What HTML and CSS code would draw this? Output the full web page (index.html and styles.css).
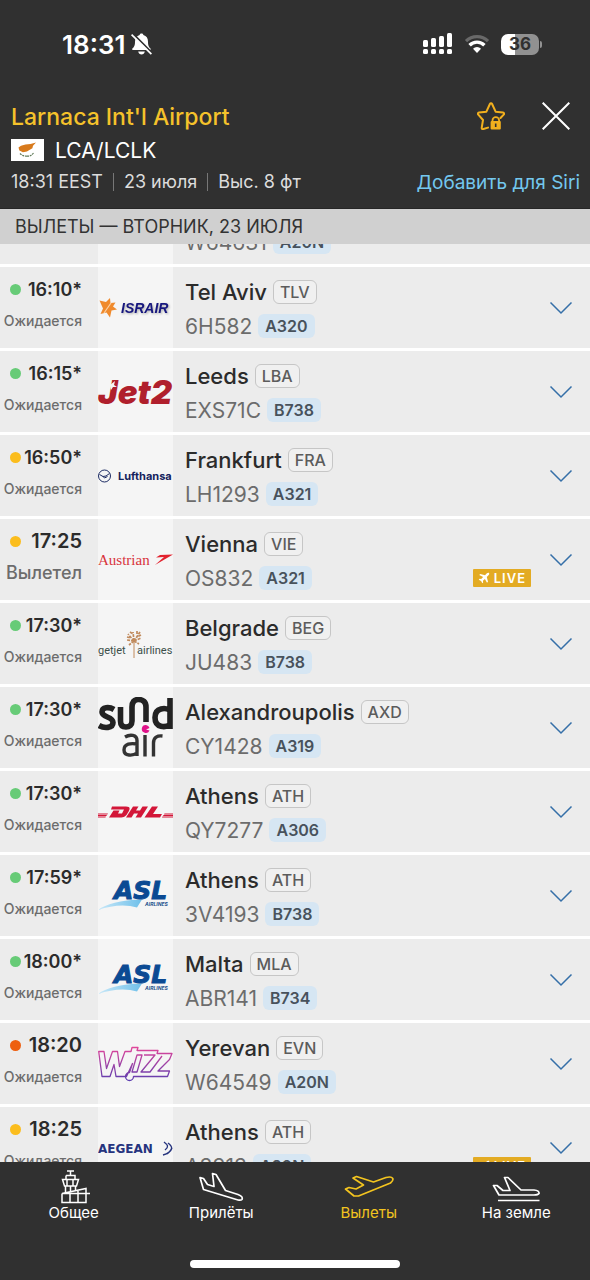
FILE: index.html
```html
<!DOCTYPE html>
<html lang="ru">
<head>
<meta charset="utf-8">
<meta name="viewport" content="width=device-width, initial-scale=1">
<title>Larnaca Int'l Airport</title>
<link rel="stylesheet" href="styles.css">
</head>
<body>
<svg class="defs" aria-hidden="true">
  <defs>
    <linearGradient id="wizz-grad" x1="0" y1="0" x2="0" y2="1"><stop offset="0" stop-color="#e0459a"/><stop offset="1" stop-color="#5d3fb0"/></linearGradient>
    <linearGradient id="asl-grad" x1="0" y1="0" x2="1" y2="0"><stop offset="0" stop-color="#c9e8f8"/><stop offset="1" stop-color="#6fc0ea"/></linearGradient>
  </defs>
  <symbol id="chevron" viewBox="0 0 24 14"><path d="M1.500 1.500 12 12 22.500 1.500" fill="none" stroke="#356fa8" stroke-width="1.500"/></symbol>
  <symbol id="plane" viewBox="0 0 24 24"><path d="M22 2c-1-1-3-.6-4.200.6L14 6.400 4.500 4 2.500 6l7.700 4.200-3.800 3.900-3.200-.4L1.500 15.400l4.700 2.400 2.400 4.700 1.700-1.700-.4-3.200 3.900-3.800L18 21.500l2-2L17.600 10l3.800-3.800C22.600 5 23 3 22 2z" fill="#fff"/></symbol>
</svg>
<div class="app">
  <header class="top">
    <div class="status-bar">
      <div class="clock"><span>18:31</span>
        <svg width="21" height="22" viewBox="0 0 21 22"><path d="M10.500.5c1.200 0 1.800.7 1.900 1.600 3 .8 4.600 3.300 4.600 6.600 0 4 1 5.300 2.500 6.800.5.600.3 1.500-.6 1.500H2c-.9 0-1.200-.9-.6-1.500C3 14 4 12.700 4 8.700c0-3.300 1.700-5.800 4.600-6.600.1-.9.700-1.600 1.900-1.600z" fill="#fff"/><path d="M7.200 18.500h6.600c-.3 1.900-1.700 3-3.300 3s-3-1.100-3.300-3z" fill="#fff"/><path d="M1.800.6 21.800 20.600" stroke="#303030" stroke-width="2"/><path d="M.6 1.600 20.400 21.200" stroke="#fff" stroke-width="1.700"/></svg>
      </div>
      <div class="signals">
        <svg width="30" height="22" viewBox="0 0 30 22" fill="#fff"><rect x="0" y="7" width="5" height="7" rx="1.500"/><rect x="8" y="5" width="5" height="9" rx="1.500"/><rect x="16" y="3" width="5" height="11" rx="1.500"/><rect x="24" y="0" width="5" height="14" rx="1.500"/><rect x="0" y="16" width="5" height="5" rx="1.500"/><rect x="8" y="16" width="5" height="5" rx="1.500"/><rect x="16" y="16" width="5" height="5" rx="1.500"/><rect x="24" y="16" width="5" height="5" rx="1.500"/></svg>
        <svg width="26" height="20" viewBox="0 0 26 20" fill="none"><path d="M2 7.200a15.600 15.600 0 0 1 22 0" stroke="#696969" stroke-width="3.200"/><path d="M5.600 11.200a10.400 10.400 0 0 1 14.800 0" stroke="#fff" stroke-width="3.400"/><path d="M9 14.700a5.800 5.800 0 0 1 8 0L13 19z" fill="#fff"/></svg>
        <div class="battery"><span>36</span></div>
      </div>
    </div>
    <div class="airport">
      <h1>Larnaca Int'l Airport</h1>
      <div class="actions">
        <button type="button" aria-label="Избранное"><svg width="28" height="28" viewBox="0 0 28 28"><path d="M11 25.600 6.400 27c-1 .4-1.800-.2-1.700-1.200L6 18 1.300 12.600c-.8-.8-.4-2 .7-2.200L9.400 9.700 12.900 2c.5-1 1.700-1 2.200 0l3.500 7.700 7.400.7c1.100.2 1.500 1.400.7 2.200L23.500 16" fill="none" stroke="#f2b01e" stroke-width="2" stroke-linecap="round" stroke-linejoin="round"/><path d="M15.500 19.500v-1a3.300 3.300 0 0 1 6.600 0v1" fill="none" stroke="#f2b01e" stroke-width="1.800"/><rect x="13.600" y="19" width="10.200" height="8.500" rx="1" fill="#f2b01e"/><path d="M18.700 21.500v3.500" stroke="#303030" stroke-width="1.600"/></svg></button>
        <button type="button" aria-label="Закрыть"><svg width="28" height="28" viewBox="0 0 28 28"><path d="M.7.700 27.300 27.300M27.300.7.700 27.300" stroke="#fff" stroke-width="2"/></svg></button>
      </div>
    </div>
    <div class="codes">
      <svg width="33" height="22" viewBox="0 0 33 22"><path fill="#fff" d="M0 0h33v22H0z"/><path d="M7.500 8.500 10 6.800l4.500-1.200 5-.6L25 3.500 22 6.800l-.6 2.500-3 1.600-2.500 1.600-4 .8-3.500-1.800z" fill="#d87a1c"/><path d="M9 14.500q3 3 7 2.500M16 17.200q4 .3 6.500-3.200" fill="none" stroke="#5f7a58" stroke-width="1.200" stroke-dasharray="2 .8"/></svg>
      <span>LCA/LCLK</span>
    </div>
    <div class="meta">
      <ul class="facts"><li>18:31 EEST</li><li>23 июля</li><li>Выс. 8 фт</li></ul>
      <a href="#siri">Добавить для Siri</a>
    </div>
  </header>
  <h2 class="day">ВЫЛЕТЫ — ВТОРНИК, 23 ИЮЛЯ</h2>
  <main class="board">
    <ul class="flights">
      <li class="flight">
        <div class="when"></div>
        <div class="logo"></div>
        <div class="info"><div class="line city"></div><div class="line number">W64631<span class="type">A20N</span></div></div>
        <div class="more"></div>
      </li>
      <li class="flight">
        <div class="when"><div class="time"><i class="dot green"></i>16:10*</div><div class="state">Ожидается</div></div>
        <div class="logo"><svg width="75" height="30" viewBox="0 0 75 30"><path d="M1.500 7.500 8 9l4-4 .5 5 5-.5-2.500 4 4 3-5.500 1-1.500 7-3.500-5-6 1.500 2.500-5.500z" fill="#f08a2c"/><path d="M13 10 6 20" stroke="#fbd3a8" stroke-width="1.200"/><text x="23" y="20" class="logo-israir">ISRAIR</text></svg></div>
        <div class="info"><div class="line city">Tel Aviv<span class="iata">TLV</span></div><div class="line number">6H582<span class="type">A320</span></div></div>
        <button class="more" type="button" aria-label="Подробнее"><svg><use href="#chevron"/></svg></button>
      </li>
      <li class="flight">
        <div class="when"><div class="time"><i class="dot green"></i>16:15*</div><div class="state">Ожидается</div></div>
        <div class="logo"><svg width="75" height="42" viewBox="0 0 75 42"><text x="0" y="33" class="logo-jet">Jet2</text><path d="M12 14l5-4-1 4 3 2-4 0-2 3z" fill="#f5f5f5"/></svg></div>
        <div class="info"><div class="line city">Leeds<span class="iata">LBA</span></div><div class="line number">EXS71C<span class="type">B738</span></div></div>
        <button class="more" type="button" aria-label="Подробнее"><svg><use href="#chevron"/></svg></button>
      </li>
      <li class="flight">
        <div class="when"><div class="time"><i class="dot yellow"></i>16:50*</div><div class="state">Ожидается</div></div>
        <div class="logo"><svg width="75" height="16" viewBox="0 0 75 16"><circle cx="6.500" cy="8" r="6" fill="none" stroke="#1b2a63" stroke-width="1"/><path d="M1.500 6.500 5 8.500l3-.5 3.500-2.500M5 8.500l1.500 1.500 3-1.500" fill="none" stroke="#1b2a63" stroke-width="1"/><text x="20" y="12" class="logo-lh">Lufthansa</text></svg></div>
        <div class="info"><div class="line city">Frankfurt<span class="iata">FRA</span></div><div class="line number">LH1293<span class="type">A321</span></div></div>
        <button class="more" type="button" aria-label="Подробнее"><svg><use href="#chevron"/></svg></button>
      </li>
      <li class="flight">
        <div class="when"><div class="time plain"><i class="dot yellow"></i>17:25</div><div class="state departed">Вылетел</div></div>
        <div class="logo"><svg width="75" height="20" viewBox="0 0 75 20"><text x="0" y="15" class="logo-os">Austrian</text><path d="M75 4.500 62 5l-4 2.500 8-.5-9 8 12-7z" fill="#e2222e"/></svg></div>
        <div class="info"><div class="line city">Vienna<span class="iata">VIE</span></div><div class="line number">OS832<span class="type">A321</span><span class="live"><svg width="12" height="12"><use href="#plane"/></svg>LIVE</span></div></div>
        <button class="more" type="button" aria-label="Подробнее"><svg><use href="#chevron"/></svg></button>
      </li>
      <li class="flight">
        <div class="when"><div class="time"><i class="dot green"></i>17:30*</div><div class="state">Ожидается</div></div>
        <div class="logo"><svg width="75" height="32" viewBox="0 0 75 32"><g stroke="#c08a5c" fill="none"><path d="M36 12V30" stroke-width="1"/><path d="M36 13 29 12M36 13 30 6M36 13l-1-9M36 13l6-9M36 13l7-3M36 13l-5 4M36 13l5 3M32 4l3 2M39 3v4M29 9l4 1M43 7l-4 2" stroke-width="1.700" stroke-dasharray="3 1"/></g><text x="0" y="26" class="logo-gj">getjet</text><text x="39" y="26" class="logo-gj">airlines</text></svg></div>
        <div class="info"><div class="line city">Belgrade<span class="iata">BEG</span></div><div class="line number">JU483<span class="type">B738</span></div></div>
        <button class="more" type="button" aria-label="Подробнее"><svg><use href="#chevron"/></svg></button>
      </li>
      <li class="flight">
        <div class="when"><div class="time"><i class="dot green"></i>17:30*</div><div class="state">Ожидается</div></div>
        <div class="logo"><svg width="75" height="62" viewBox="0 0 75 62" role="img" aria-label="Sundair"><g fill="none" stroke="#222" stroke-width="5.600"><path d="M16 12.500C11 9.500 4 10 4 15c0 6 11 4 11 10.500 0 6-9 6-14 3"/><path d="M22.500 10v14c0 4 2 6 5.500 6s6-2 6-6V10c0-5 2-7.500 6.500-7.500S48 5 48 10v15"/><path d="M72 1v31M72 13.500c-4-3-15-3.500-15 7 0 11 11 10 15 7"/></g><g fill="none" stroke="#333" stroke-width="3.400"><path d="M27 40c5-3 12-2.500 12 3.500V59M39 47c-6-1-13-.5-13 6 0 6.500 9 6 13 3"/><path d="M47 38v21.500M55.500 59.500V46c0-6 4-7.500 9-7"/></g><path d="M48 28a4 4 0 1 0 3.500 5.500L48 32.500l3.500-1.500A4 4 0 0 0 48 28z" fill="#e0148a"/></svg></div>
        <div class="info"><div class="line city">Alexandroupolis<span class="iata">AXD</span></div><div class="line number">CY1428<span class="type">A319</span></div></div>
        <button class="more" type="button" aria-label="Подробнее"><svg><use href="#chevron"/></svg></button>
      </li>
      <li class="flight">
        <div class="when"><div class="time"><i class="dot green"></i>17:30*</div><div class="state">Ожидается</div></div>
        <div class="logo"><svg width="75" height="12" viewBox="0 0 75 12" role="img" aria-label="DHL"><g fill="#d31638"><path d="M14 .5h14c5 0 4 3 2 6-2 4-4 5-8 5H11l4.500-7h6l-1.500 3h4l2-4H13z"/><path d="M35 .5h5.500L38 4.500h4L44.500.5H50l-7 11h-5.500L40 7.500h-4L33.500 11.500H28z"/><path d="M54 .5h6L55 8h9l-2 3.500H46.500z"/><path d="M0 7.500h10l-.7 1H0zM0 9h9l-.7 1H0zM0 10.500h8l-.6 1H0zM66.500 7.500H75v1h-9zM65.500 9H75v1H65zM64.500 10.500H75v1H64z"/></g></svg></div>
        <div class="info"><div class="line city">Athens<span class="iata">ATH</span></div><div class="line number">QY7277<span class="type">A306</span></div></div>
        <button class="more" type="button" aria-label="Подробнее"><svg><use href="#chevron"/></svg></button>
      </li>
      <li class="flight">
        <div class="when"><div class="time"><i class="dot green"></i>17:59*</div><div class="state">Ожидается</div></div>
        <div class="logo"><svg width="75" height="38" viewBox="0 0 75 38"><path d="M0 33C8 27 22 23 44 22.500L39 30.500C28 27 14 28 0 33z" fill="url(#asl-grad)"/><text x="16" y="22" class="logo-asl">ASL</text><text x="47" y="29" class="logo-asl-sub">AIRLINES</text></svg></div>
        <div class="info"><div class="line city">Athens<span class="iata">ATH</span></div><div class="line number">3V4193<span class="type">B738</span></div></div>
        <button class="more" type="button" aria-label="Подробнее"><svg><use href="#chevron"/></svg></button>
      </li>
      <li class="flight">
        <div class="when"><div class="time"><i class="dot green"></i>18:00*</div><div class="state">Ожидается</div></div>
        <div class="logo"><svg width="75" height="38" viewBox="0 0 75 38"><path d="M0 33C8 27 22 23 44 22.500L39 30.500C28 27 14 28 0 33z" fill="url(#asl-grad)"/><text x="16" y="22" class="logo-asl">ASL</text><text x="47" y="29" class="logo-asl-sub">AIRLINES</text></svg></div>
        <div class="info"><div class="line city">Malta<span class="iata">MLA</span></div><div class="line number">ABR141<span class="type">B734</span></div></div>
        <button class="more" type="button" aria-label="Подробнее"><svg><use href="#chevron"/></svg></button>
      </li>
      <li class="flight">
        <div class="when"><div class="time plain"><i class="dot orange"></i>18:20</div><div class="state">Ожидается</div></div>
        <div class="logo"><svg width="75" height="36" viewBox="0 0 75 36" role="img" aria-label="Wizz"><path d="M.7 5.500H6l2.500 17 6-17h5l2 15 5.500-15h6l1-4h6l-1 3h21l-1 3H74l-2.500 6L60 25h11.500l-2 5.500H35.500a4 4 0 1 1-4-4l3-9-6 13H18l-2-12-4 12H4zM34 26l5-17h5l-5 17zM46 9h11L43 26h9L64 10" fill="none" stroke="url(#wizz-grad)" stroke-width="1.300" stroke-linejoin="round"/></svg></div>
        <div class="info"><div class="line city">Yerevan<span class="iata">EVN</span></div><div class="line number">W64549<span class="type">A20N</span></div></div>
        <button class="more" type="button" aria-label="Подробнее"><svg><use href="#chevron"/></svg></button>
      </li>
      <li class="flight">
        <div class="when"><div class="time plain"><i class="dot yellow"></i>18:25</div><div class="state">Ожидается</div></div>
        <div class="logo"><svg width="75" height="16" viewBox="0 0 75 16"><text x="0" y="13" class="logo-a3">AEGEAN</text><path d="M66 2c4 3 5 5 1 8M70 3c5 4 5 6-1 11M65 15c4-1 8-4 9-7" fill="none" stroke="#26347e" stroke-width="1.400"/></svg></div>
        <div class="info"><div class="line city">Athens<span class="iata">ATH</span></div><div class="line number">A3913<span class="type">A20N</span><span class="live"><svg width="12" height="12"><use href="#plane"/></svg>LIVE</span></div></div>
        <button class="more" type="button" aria-label="Подробнее"><svg><use href="#chevron"/></svg></button>
      </li>
    </ul>
  </main>
  <footer class="bottom">
    <nav class="tabs">
      <a href="#general"><svg width="54" height="34" viewBox="7 0 54 34"><g fill="none" stroke="#fff" stroke-width="1.500"><path d="M27 1h7M30.500 1v4M26 5.500h9v4M26 5.500v4M22.500 9.500h16l-2 6.500h-12zM27 9.500V16M33 9.500V16M25.500 16v7M35.500 16v4M30.500 16v5"/><path d="M22 23.500h28M22 23.500v9h24v-14l-24 5M30 23.500v9M38 21v11.500"/></g></svg>Общее</a>
      <a href="#arrivals"><svg width="54" height="34" viewBox="0 0 54 34"><path d="M6 7.500 9.500 8.500 13.500 14.500 20 16.500 18.500 3.500 22 4.500 31.500 20.500 44 24.500Q49.500 26.500 48 29.500 47 30.500 44 30L9.500 19.500z" fill="none" stroke="#fff" stroke-width="1.700" stroke-linejoin="round"/></svg>Прилёты</a>
      <a class="active" href="#departures" aria-current="page"><svg width="54" height="34" viewBox="0 0 54 34"><path d="M3.500 19 7 17.500 14 19 21.500 15 11 8 14.500 6.500 31.500 12 44 7.500Q50 6 51 9 51 11 48.500 13L16.500 26 12 26z" fill="none" stroke="#f3c41f" stroke-width="1.700" stroke-linejoin="round"/></svg>Вылеты</a>
      <a href="#ground"><svg width="54" height="34" viewBox="0 0 54 34"><path d="M4.500 15.500 8 15.500 14 20.500 21 20.500 15.500 7.500 19 7.500 32 20H45Q50.500 20.500 50 23.500 49 25 45 25H10zM9 30.500H50.500" fill="none" stroke="#fff" stroke-width="1.700" stroke-linejoin="round"/></svg>На земле</a>
    </nav>
    <div class="home"></div>
  </footer>
</div>
</body>
</html>
```

FILE: styles.css
```css
* { box-sizing: border-box; }
body { margin: 0; font-family: Inter, "Noto Sans", sans-serif; background: #303030; color: #2b2b2b; }
h1, h2, ul { margin: 0; padding: 0; font-weight: 400; list-style: none; }
button { border: 0; padding: 0; background: none; cursor: pointer; display: flex; }
a { text-decoration: none; }
.defs { position: absolute; width: 0; height: 0; }
.app { display: flex; flex-direction: column; height: 100vh; }

.top { background: #303030; color: #fff; padding: 28px 10px 10px 11px; border-bottom: 1px solid #262626; }
.status-bar { display: flex; justify-content: space-between; align-items: center; height: 32px; padding: 0 41px 0 51px; margin-bottom: 40px; }
.clock { display: flex; align-items: center; gap: 6px; font-size: 26px; font-weight: 600; }
.signals { display: flex; align-items: center; gap: 11px; }
.battery { position: relative; width: 38px; height: 21px; border-radius: 7px; background: linear-gradient(90deg, #fff 36%, #919191 36%); color: #303030; font-size: 17px; font-weight: 700; line-height: 21px; text-align: center; }
.battery::after { content: ""; position: absolute; right: -3px; top: 7px; width: 2px; height: 7px; border-radius: 0 3px 3px 0; background: #919191; }
.airport { display: flex; justify-content: space-between; align-items: center; height: 34px; }
.airport h1 { color: #f5c22b; font-size: 23px; font-weight: 500; }
.actions { display: flex; gap: 37px; padding: 0 10px 2px 0; }
.codes { display: flex; align-items: center; gap: 11px; height: 32px; font-size: 21px; }
.meta { display: flex; justify-content: space-between; align-items: center; height: 32px; }
.facts { display: flex; font-size: 18px; line-height: 18px; color: #dcdcdc; }
.facts li + li { border-left: 1px solid #777; margin-left: 10px; padding-left: 10px; }
.meta a { color: #74c8ef; font-size: 19px; }

.day { height: 35px; line-height: 35px; padding-left: 15px; font-size: 18px; background: #d0d0d0; color: #333; flex: none; }

.board { flex: 1; min-height: 0; overflow: hidden; background: #ececec; }
.flights { margin-top: -61px; }
.flight { display: grid; grid-template-columns: 98px 75px 1fr 59px; height: 84px; border-bottom: 3px solid #fff; background: #ececec; }
.when { padding: 6px 16px 0 0; text-align: right; }
.time { display: flex; align-items: center; justify-content: space-between; height: 32px; padding-left: 10px; font-size: 18px; font-weight: 600; }
.time.plain { font-size: 20px; }
.dot { width: 11px; height: 11px; border-radius: 50%; flex: none; }
.green { background: #67cb77; }
.yellow { background: #fbbd1d; }
.orange { background: #ee5f10; }
.state { line-height: 31px; font-size: 14px; font-weight: 500; color: #6c6c6c; }
.state.departed { font-size: 18px; }
.logo { display: flex; align-items: center; justify-content: center; background: #f5f5f5; }
.info { padding: 8px 0 0 12px; }
.line { display: flex; align-items: center; height: 34px; gap: 6px; white-space: nowrap; }
.city { font-size: 22px; font-weight: 500; color: #2b2b2b; }
.number { font-size: 21px; color: #6c6c6c; }
.iata, .type { height: 24px; padding: 0 6px; border-radius: 6px; font-size: 16px; line-height: 24px; }
.iata { border: 1px solid #c6c6c6; line-height: 22px; font-weight: 500; color: #5c5c5c; background: #f0f0f0; }
.type { padding: 0 7px; background: #d6e6f3; font-weight: 600; color: #48525c; }
.live { display: flex; align-items: center; gap: 4px; height: 18px; margin-left: auto; padding: 0 5px; border-radius: 1px; background: #e3ab23; color: #fff; font-size: 13px; font-weight: 600; letter-spacing: 1px; }
.more { align-items: center; justify-content: center; }
.more svg { width: 24px; height: 14px; }

.logo-israir { font: italic 700 14px "Liberation Sans", sans-serif; fill: #16167e; filter: drop-shadow(1px 1px 1px #aaa); }
.logo-jet { font: italic 900 33px Inter, sans-serif; fill: #b01f2c; }
.logo-lh { font: 700 11px Inter, sans-serif; fill: #14225c; }
.logo-os { font: 15px "Liberation Serif", serif; fill: #d8343c; }
.logo-gj { font: 11px Roboto, sans-serif; fill: #3c4f4a; }
.logo-asl { font: italic 700 25px "DejaVu Sans", sans-serif; fill: #0b4a93; stroke: #0b4a93; stroke-width: 1px; }
.logo-asl-sub { font: italic 700 5px Inter, sans-serif; fill: #24508c; }
.logo-a3 { font: 700 12px "DejaVu Sans", sans-serif; fill: #26347e; }

.bottom { background: #303030; padding: 8px 0 12px; flex: none; }
.tabs { display: grid; grid-template-columns: repeat(4, 1fr); }
.tabs a { display: flex; flex-direction: column; align-items: center; color: #fff; font-size: 15px; line-height: 18px; }
.tabs .active { color: #f3c41f; }
.home { width: 210px; height: 8px; margin: 38px auto 0; border-radius: 4px; background: #fff; }
```
